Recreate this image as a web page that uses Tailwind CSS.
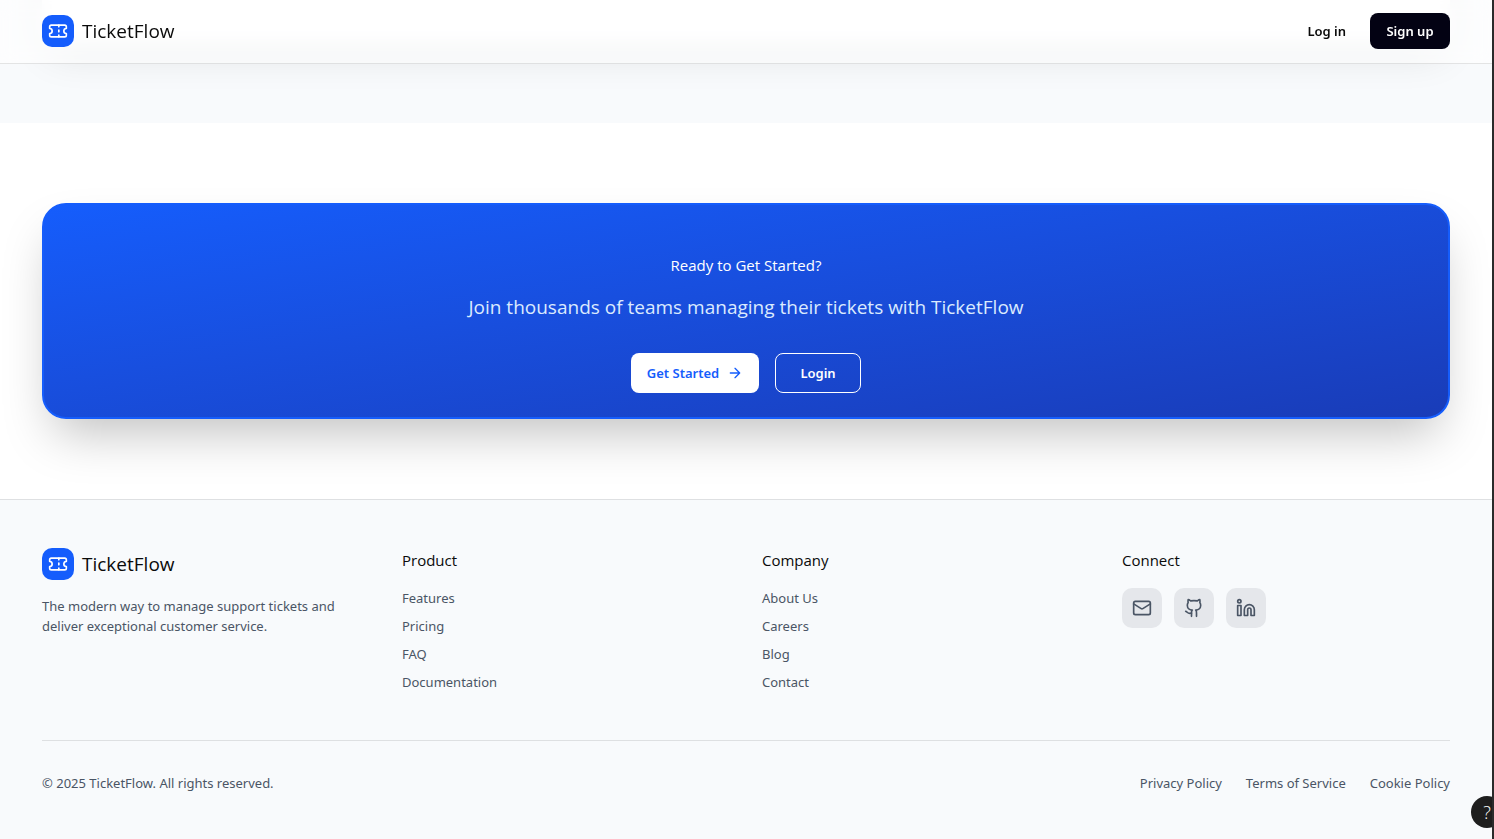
<!DOCTYPE html>
<html lang="en">
<head>
<meta charset="utf-8">
<meta name="viewport" content="width=device-width, initial-scale=1">
<title>TicketFlow</title>
<script src="https://cdn.jsdelivr.net/npm/@tailwindcss/browser@4"></script>
</head>
<body class="bg-white font-['Open_Sans',sans-serif] text-[15px] leading-6 text-neutral-950">
<svg class="hidden" aria-hidden="true">
  <symbol id="ticket" viewBox="0 0 24 24">
    <path d="M2 9a3 3 0 0 1 0 6v2a2 2 0 0 0 2 2h16a2 2 0 0 0 2-2v-2a3 3 0 0 1 0-6V7a2 2 0 0 0-2-2H4a2 2 0 0 0-2 2Z"/>
    <path d="M13 5v2M13 17v2M13 11v2"/>
  </symbol>
</svg>
<div class="relative flex min-h-screen flex-col overflow-hidden border-r-2 border-[#2b2b2b]">
  <header class="absolute inset-x-0 top-0 z-10 border-b border-black/10 bg-white/65 pb-px backdrop-blur-sm">
    <div class="mx-auto flex h-[62px] max-w-[1440px] items-center justify-between px-4">
      <a href="#" class="flex items-center gap-2">
        <span class="flex size-8 items-center justify-center rounded-[10px] bg-[#155dfc] text-white">
          <svg class="size-5 fill-none stroke-current stroke-2" stroke-linecap="round" stroke-linejoin="round" aria-hidden="true"><use href="#ticket"/></svg>
        </span>
        <span class="text-[19px] leading-7">TicketFlow</span>
      </a>
      <nav class="flex items-center gap-2 font-['Noto_Sans',sans-serif] text-[13px] leading-5 font-semibold">
        <button type="button" class="h-9 rounded-lg px-4">Log in</button>
        <button type="button" class="h-9 w-20 rounded-lg bg-[#030213] text-white">Sign up</button>
      </nav>
    </div>
  </header>

  <section class="flex h-[123px] flex-col justify-end bg-[#f8fafc] pb-20">
    <div class="mx-auto w-full max-w-[1440px] px-4">
      <div class="h-80 rounded-2xl bg-white shadow-[0_16px_40px_-6px] shadow-black/12"></div>
    </div>
  </section>

  <section class="relative bg-white py-20">
    <div class="mx-auto max-w-[1440px] px-4">
      <div class="rounded-3xl border-2 border-[#155dfc] bg-linear-to-br from-[#155dfc] to-[#193cb8] px-6 pt-12 pb-6 text-center text-white shadow-2xl">
        <h2>Ready to Get Started?</h2>
        <p class="mt-4 text-[19px] leading-7 text-blue-100">Join thousands of teams managing their tickets with TicketFlow</p>
        <div class="mt-8 flex justify-center gap-4 font-['Noto_Sans',sans-serif] text-[13px] leading-5 font-semibold">
          <button type="button" class="flex h-10 w-32 items-center justify-center gap-2 rounded-lg bg-white text-[#155dfc]">Get Started
            <svg class="size-4 fill-none stroke-current stroke-2" viewBox="0 0 24 24" stroke-linecap="round" stroke-linejoin="round" aria-hidden="true"><path d="M5 12h14M12 5l7 7-7 7"/></svg>
          </button>
          <button type="button" class="h-10 w-[86px] rounded-lg border border-white">Login</button>
        </div>
      </div>
    </div>
  </section>

  <footer class="relative flex-1 border-t border-black/10 bg-[#f8fafc] pt-12 pb-10">
    <div class="mx-auto max-w-[1440px] px-4">
      <div class="grid grid-cols-2 gap-8 md:grid-cols-4">
        <div>
          <a href="#" class="flex items-center gap-2">
            <span class="flex size-8 items-center justify-center rounded-[10px] bg-[#155dfc] text-white">
              <svg class="size-5 fill-none stroke-current stroke-2" stroke-linecap="round" stroke-linejoin="round" aria-hidden="true"><use href="#ticket"/></svg>
            </span>
            <span class="text-[19px] leading-7">TicketFlow</span>
          </a>
          <p class="mt-4 font-['Noto_Sans',sans-serif] text-[13px] leading-5 text-[#4a5565]">The modern way to manage support tickets and deliver exceptional customer service.</p>
        </div>
        <div>
          <h3>Product</h3>
          <ul class="mt-4 flex flex-col gap-2 font-['Noto_Sans',sans-serif] text-[13px] leading-5 text-[#4a5565]">
            <li><a href="#">Features</a></li>
            <li><a href="#">Pricing</a></li>
            <li><a href="#">FAQ</a></li>
            <li><a href="#">Documentation</a></li>
          </ul>
        </div>
        <div>
          <h3>Company</h3>
          <ul class="mt-4 flex flex-col gap-2 font-['Noto_Sans',sans-serif] text-[13px] leading-5 text-[#4a5565]">
            <li><a href="#">About Us</a></li>
            <li><a href="#">Careers</a></li>
            <li><a href="#">Blog</a></li>
            <li><a href="#">Contact</a></li>
          </ul>
        </div>
        <div>
          <h3>Connect</h3>
          <div class="mt-4 flex gap-3 text-[#4a5565]">
            <a href="#" aria-label="Email" class="flex size-10 items-center justify-center rounded-[10px] bg-gray-200">
              <svg class="size-5 fill-none stroke-current stroke-2" viewBox="0 0 24 24" stroke-linecap="round" stroke-linejoin="round"><rect width="20" height="16" x="2" y="4" rx="2"/><path d="m22 7-8.991 5.727a2 2 0 0 1-2.009 0L2 7"/></svg>
            </a>
            <a href="#" aria-label="GitHub" class="flex size-10 items-center justify-center rounded-[10px] bg-gray-200">
              <svg class="size-5 fill-none stroke-current stroke-2" viewBox="0 0 24 24" stroke-linecap="round" stroke-linejoin="round"><path d="M15 22v-4a4.8 4.8 0 0 0-1-3.5c3 0 6-2 6-5.5.08-1.25-.27-2.48-1-3.5.28-1.15.28-2.35 0-3.5 0 0-1 0-3 1.5-2.64-.5-5.36-.5-8 0C6 2 5 2 5 2c-.3 1.15-.3 2.35 0 3.5A5.403 5.403 0 0 0 4 9c0 3.5 3 5.5 6 5.5-.39.49-.68 1.05-.85 1.65-.17.6-.22 1.23-.15 1.85v4"/><path d="M9 18c-4.51 2-5-2-7-2"/></svg>
            </a>
            <a href="#" aria-label="LinkedIn" class="flex size-10 items-center justify-center rounded-[10px] bg-gray-200">
              <svg class="size-5 fill-none stroke-current stroke-2" viewBox="0 0 24 24" stroke-linecap="round" stroke-linejoin="round"><path d="M16 8a6 6 0 0 1 6 6v7h-4v-7a2 2 0 0 0-4 0v7h-4v-7a6 6 0 0 1 6-6z"/><rect width="4" height="12" x="2" y="9"/><circle cx="4" cy="4" r="2"/></svg>
            </a>
          </div>
        </div>
      </div>
      <div class="mt-12 flex flex-wrap justify-between gap-4 border-t border-black/10 pt-8 font-['Noto_Sans',sans-serif] text-[13px] leading-5 text-[#4a5565]">
        <p>© 2025 TicketFlow. All rights reserved.</p>
        <nav class="flex gap-6">
          <a href="#">Privacy Policy</a>
          <a href="#">Terms of Service</a>
          <a href="#">Cookie Policy</a>
        </nav>
      </div>
    </div>
  </footer>

  <button type="button" aria-label="Help" class="absolute -right-[11px] bottom-[11px] z-20 size-8 rounded-full bg-[#1e1e1e] text-lg font-light text-white">?</button>
</div>
</body>
</html>
